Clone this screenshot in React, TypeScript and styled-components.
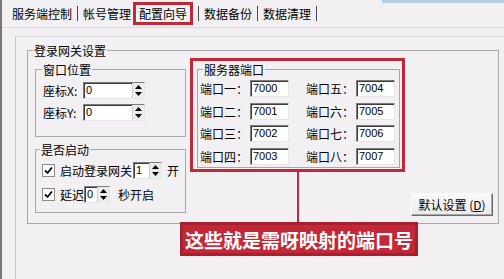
import React from 'react'
import styled, { createGlobalStyle } from 'styled-components'

const GlobalStyle = createGlobalStyle`
  html, body {
    margin: 0;
    padding: 0;
    background: #f2f0f3;
  }
`

const RED = '#c32838'

const Window = styled.div`
  position: relative;
  width: 504px;
  height: 279px;
  overflow: hidden;
  box-sizing: border-box;
  display: flex;
  flex-direction: column;
  border-left: 2px solid #787878;
  background: linear-gradient(#b6cde4, #b6cde4) no-repeat 380px 0 / 124px 3px, #f2f0f3;
  font-family: 'Noto Sans CJK SC', 'Liberation Sans', sans-serif;
  font-size: 12px;
  color: #000;
`

const TabBar = styled.div`
  flex: none;
  height: 27px;
  display: flex;
  align-items: center;
  padding-left: 10px;
  border-bottom: 1px solid #dadada;
`

const Tab = styled.div<{ $active?: boolean }>`
  display: flex;
  align-items: center;
  line-height: 15px;
  white-space: nowrap;
  ${(p) =>
    p.$active &&
    `
    box-sizing: border-box;
    height: 23px;
    margin-left: 2px;
    padding: 0 3px;
    border: 3px solid ${RED};
  `}
`

const TabSep = styled.div`
  width: 1px;
  height: 15px;
  margin: 0 5px;
  background: #4a4a4a;
`

const Page = styled.div`
  flex: 1;
  margin: 8px 0 0 13px;
  padding: 7px 0 0 11px;
  border-left: 1px solid #c4c4c4;
  border-top: 1px solid #dcdcdc;
`

const GroupBox = styled.fieldset<{ $w?: number; $h: number; $pad: string }>`
  box-sizing: border-box;
  margin: 0;
  min-inline-size: 0;
  ${(p) => (p.$w ? `width: ${p.$w}px;` : '')}
  height: ${(p) => p.$h}px;
  padding: ${(p) => p.$pad};
  border: 1px solid #a8a8a8;
`

const Legend = styled.legend<{ $offset: number }>`
  margin-left: ${(p) => p.$offset}px;
  padding: 0 1px;
  font-size: 12px;
  line-height: 13px;
`

const OuterBody = styled.div`
  display: flex;
  height: 100%;
`

const LeftCol = styled.div`
  width: 151px;
  flex: none;
  display: flex;
  flex-direction: column;
  gap: 6px;
`

const Rows = styled.div<{ $gap: number }>`
  display: flex;
  flex-direction: column;
  gap: ${(p) => p.$gap}px;
`

const Row = styled.div`
  display: flex;
  align-items: center;
  height: 17px;
  white-space: nowrap;
`

const FieldLabel = styled.span<{ $w?: number }>`
  ${(p) => (p.$w ? `width: ${p.$w}px;` : '')}
  flex: none;
  line-height: 15px;
`

const Text = styled.span<{ $ml?: number }>`
  margin-left: ${(p) => p.$ml ?? 0}px;
  line-height: 15px;
`

const SpinBox = styled.div<{ $w: number; $ml?: number }>`
  box-sizing: border-box;
  display: flex;
  width: ${(p) => p.$w}px;
  height: 17px;
  margin-left: ${(p) => p.$ml ?? 0}px;
  background: #fff;
  border: 1px solid;
  border-color: #7c7c7c #e6e6e6 #e6e6e6 #7c7c7c;
  box-shadow: inset 1px 1px 0 #3c3c3c;
`

const SpinValue = styled.span`
  flex: 1;
  padding-left: 2px;
  font-family: 'Liberation Sans', Arial, sans-serif;
  font-size: 11px;
  line-height: 15px;
`

const SpinButtons = styled.div`
  width: 11px;
  display: flex;
  flex-direction: column;
  background: #ececec;
  border-left: 1px solid #d0d0d0;
`

const SpinHalf = styled.div`
  flex: 1;
  display: flex;
  align-items: center;
  justify-content: center;
`

const CheckBox = styled.span`
  box-sizing: border-box;
  width: 13px;
  height: 13px;
  margin-right: 5px;
  flex: none;
  display: flex;
  align-items: center;
  justify-content: center;
  background: #fff;
  border: 1px solid #8c8c8c;
`

const RedFrame = styled.div`
  box-sizing: border-box;
  width: 215px;
  height: 114px;
  margin: -5px 0 0 4px;
  padding: 2px 2px 0 4px;
  border: 3px solid ${RED};
  flex: none;
`

const PortGrid = styled.div`
  display: grid;
  grid-template-columns: auto auto;
  column-gap: 15px;
  row-gap: 5.5px;
`

const PortInput = styled.div`
  box-sizing: border-box;
  width: 39px;
  height: 17px;
  padding-left: 2px;
  background: #fff;
  border: 1px solid;
  border-color: #7c7c7c #e6e6e6 #e6e6e6 #7c7c7c;
  box-shadow: inset 1px 1px 0 #3c3c3c;
  font-family: 'Liberation Sans', Arial, sans-serif;
  font-size: 11px;
  line-height: 15px;
`

const RightArea = styled.div`
  flex: 1;
  display: flex;
  align-items: flex-end;
  justify-content: flex-end;
`

const Button = styled.button`
  box-sizing: border-box;
  width: 82px;
  height: 23px;
  margin-bottom: 1px;
  padding: 0;
  border: 1px solid;
  border-color: #fff #6a6a6a #6a6a6a #fff;
  box-shadow: inset -1px -1px 0 #a8a8a8;
  background: linear-gradient(#fbfbfb, #e9e8ea);
  font-family: 'Noto Sans CJK SC', 'Liberation Sans', sans-serif;
  font-size: 12px;
  color: #000;
`

const Callout = styled.div`
  position: absolute;
  left: 178px;
  top: 172px;
  display: flex;
  flex-direction: column;
`

const Stem = styled.div`
  width: 2px;
  height: 50px;
  margin-left: 117px;
  background: ${RED};
`

const CalloutLabel = styled.div`
  box-sizing: border-box;
  width: 238px;
  height: 34px;
  display: flex;
  align-items: center;
  justify-content: center;
  border: 3px solid #a81f2e;
  background: ${RED};
  color: #fff;
  font-size: 19px;
  font-weight: 700;
  white-space: nowrap;
`

function Spin({ value, w, ml }: { value: string; w: number; ml?: number }) {
  return (
    <SpinBox $w={w} $ml={ml}>
      <SpinValue>{value}</SpinValue>
      <SpinButtons>
        <SpinHalf>
          <svg width="7" height="4" viewBox="0 0 7 4">
            <path d="M0 4 L3.5 0 L7 4 Z" fill="#000" />
          </svg>
        </SpinHalf>
        <SpinHalf>
          <svg width="7" height="4" viewBox="0 0 7 4">
            <path d="M0 0 L3.5 4 L7 0 Z" fill="#000" />
          </svg>
        </SpinHalf>
      </SpinButtons>
    </SpinBox>
  )
}

function Check() {
  return (
    <CheckBox>
      <svg width="9" height="9" viewBox="0 0 9 9">
        <path d="M1 4.5 L3.5 7 L8 1.5" stroke="#000" strokeWidth="1.8" fill="none" />
      </svg>
    </CheckBox>
  )
}

const tabs = ['服务端控制', '帐号管理', '配置向导', '数据备份', '数据清理']

const ports = [
  ['端口一：', '7000', '端口五：', '7004'],
  ['端口二：', '7001', '端口六：', '7005'],
  ['端口三：', '7002', '端口七：', '7006'],
  ['端口四：', '7003', '端口八：', '7007'],
]

export default function App() {
  return (
    <>
      <GlobalStyle />
      <Window>
        <TabBar>
          {tabs.map((t, i) => (
            <React.Fragment key={t}>
              <Tab $active={i === 2}>{t}</Tab>
              {i !== 1 && <TabSep />}
            </React.Fragment>
          ))}
        </TabBar>
        <Page>
          <GroupBox $w={472} $h={180} $pad="6px 5px 6px 7px">
            <Legend $offset={-2}>登录网关设置</Legend>
            <OuterBody>
              <LeftCol>
                <GroupBox $h={74} $pad="6px 7px">
                  <Legend $offset={-1}>窗口位置</Legend>
                  <Rows $gap={5}>
                    <Row>
                      <FieldLabel $w={40}>座标X:</FieldLabel>
                      <Spin value="0" w={62} />
                    </Row>
                    <Row>
                      <FieldLabel $w={40}>座标Y:</FieldLabel>
                      <Spin value="0" w={62} />
                    </Row>
                  </Rows>
                </GroupBox>
                <GroupBox $h={70} $pad="6px 6px">
                  <Legend $offset={-2}>是否启动</Legend>
                  <Rows $gap={7}>
                    <Row>
                      <Check />
                      <Text>启动登录网关</Text>
                      <Spin value="1" w={29} ml={1} />
                      <Text $ml={5}>开</Text>
                    </Row>
                    <Row>
                      <Check />
                      <Text>延迟</Text>
                      <Spin value="0" w={26} />
                      <Text $ml={8}>秒开启</Text>
                    </Row>
                  </Rows>
                </GroupBox>
              </LeftCol>
              <RedFrame>
                <GroupBox $h={105} $pad="4px 2px 0 2px">
                  <Legend $offset={3}>服务器端口</Legend>
                  <PortGrid>
                    {ports.flatMap(([l1, v1, l2, v2]) => [
                      <Row key={l1}>
                        <FieldLabel $w={50}>{l1}</FieldLabel>
                        <PortInput>{v1}</PortInput>
                      </Row>,
                      <Row key={l2}>
                        <FieldLabel $w={50}>{l2}</FieldLabel>
                        <PortInput>{v2}</PortInput>
                      </Row>,
                    ])}
                  </PortGrid>
                </GroupBox>
              </RedFrame>
              <RightArea>
                <Button>
                  默认设置 (<u>D</u>)
                </Button>
              </RightArea>
            </OuterBody>
          </GroupBox>
        </Page>
        <Callout>
          <Stem />
          <CalloutLabel>这些就是需呀映射的端口号</CalloutLabel>
        </Callout>
      </Window>
    </>
  )
}
